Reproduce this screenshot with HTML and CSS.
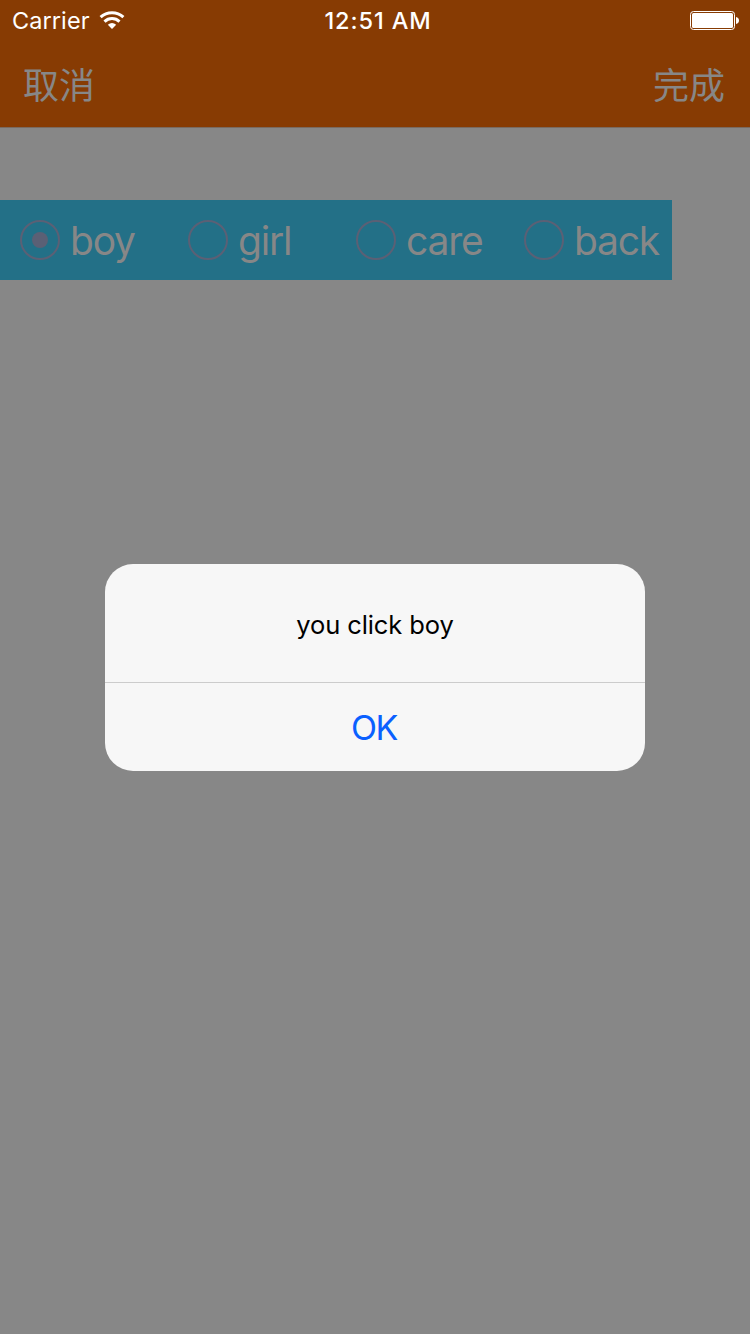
FILE: index.html
```html
<!DOCTYPE html>
<html lang="zh">
<head>
<meta charset="utf-8">
<title>Radio</title>
<link rel="stylesheet" href="styles.css">
</head>
<body>
<div class="screen">
  <header class="header">
    <div class="status">
      <div class="status-left"><span class="carrier">Carrier</span>
        <svg class="wifi" width="26" height="18" viewBox="0 0 26 18"><g fill="none" stroke="#fff" stroke-width="3"><path d="M1.6 6.2a16.5 16.5 0 0 1 22.8 0"/><path d="M5.5 10.6a10.9 10.9 0 0 1 15 0"/></g><path d="M8.8 13.7a6.5 6.5 0 0 1 8.4 0L13 18z" fill="#fff"/></svg>
      </div>
      <span class="time">12:51 AM</span>
      <svg class="battery" width="49" height="19" viewBox="0 0 49 19"><rect x=".5" y=".5" width="44" height="18" rx="3" fill="none" stroke="#fff"/><rect x="2" y="2" width="41" height="15" rx="1.5" fill="#fff"/><path d="M46 6q3 .8 3 3.5t-3 3.5z" fill="#fff"/></svg>
    </div>
    <nav class="nav"><span>取消</span><span>完成</span></nav>
  </header>
  <div class="radios">
    <div class="radio"><span class="ring on"></span><span class="label">boy</span></div>
    <div class="radio"><span class="ring"></span><span class="label">girl</span></div>
    <div class="radio"><span class="ring"></span><span class="label">care</span></div>
    <div class="radio"><span class="ring"></span><span class="label">back</span></div>
  </div>
  <div class="alert">
    <div class="message"><span>you click boy</span></div>
    <div class="action"><span>OK</span></div>
  </div>
</div>
</body>
</html>
```
FILE: styles.css
```css
body { margin: 0; }
.screen { position: relative; width: 750px; height: 1334px; overflow: hidden; background: #878787; font-family: Inter, "Noto Sans CJK SC", sans-serif; }
.header { box-sizing: border-box; height: 128px; background: #873b03; border-bottom: 1px solid #7a6a60; }
.status { display: grid; grid-template-columns: 1fr auto 1fr; align-items: center; height: 40px; padding: 0 11px 0 12px; color: #fff; font-size: 24px; line-height: 42px; }
.status-left { display: flex; align-items: center; gap: 9.5px; }
.wifi { margin-bottom: 2px; }
.carrier { font-size: 23.5px; letter-spacing: .08px; }
.time { padding-left: 5px; font-weight: 500; font-size: 23.5px; letter-spacing: .9px; }
.battery { justify-self: end; margin-bottom: 2px; }
.nav { display: flex; justify-content: space-between; height: 88px; padding: 0 25px 0 23px; font: 36px/86px "Noto Sans CJK SC", sans-serif; color: #878787; }
.radios { display: flex; width: 672px; height: 80px; margin-top: 72px; background: #237087; }
.radio { display: flex; align-items: center; box-sizing: border-box; width: 168px; padding-left: 20px; gap: 10px; color: #878787; font-size: 39px; letter-spacing: -1.2px; }
.label { padding-top: 1px; }
.ring { box-sizing: border-box; width: 40px; height: 40px; flex: none; border: 2px solid #5b6075; border-radius: 50%; display: grid; place-items: center; }
.on::after { content: ""; width: 16px; height: 16px; border-radius: 50%; background: #5b6075; }
.alert { position: absolute; left: 105px; top: 564px; width: 540px; height: 207px; border-radius: 28px; background: #f7f7f7; text-align: center; }
.message { height: 118px; border-bottom: 1px solid #ccc; font-size: 25.5px; letter-spacing: -.1px; line-height: 122px; color: #000; }
.action { height: 88px; font-size: 34px; letter-spacing: -1.5px; text-indent: -2px; line-height: 89px; color: #0a60ff; }
```
